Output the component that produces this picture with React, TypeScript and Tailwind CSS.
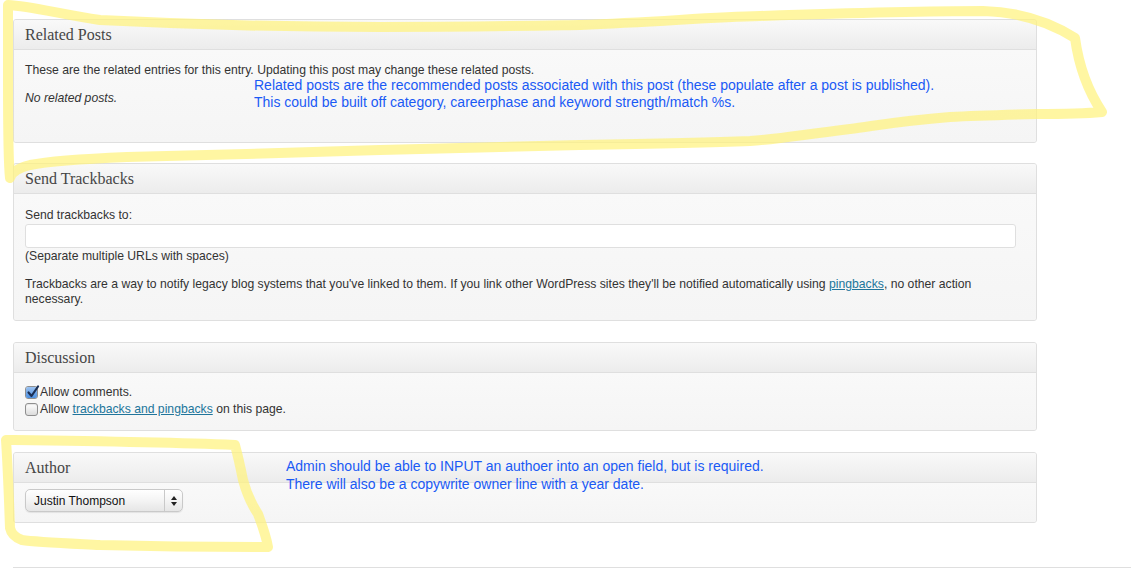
import React from "react";

const serif = "font-['Liberation_Serif',Georgia,serif]";

function Panel({
  title,
  bodyClass,
  className,
  children,
}: {
  title: string;
  bodyClass: string;
  className?: string;
  children?: React.ReactNode;
}) {
  return (
    <div
      className={`w-[1024px] border border-[#dfdfdf] rounded-[3px] bg-[#f5f5f5] overflow-hidden ${className ?? ""}`}
    >
      <div
        className={`h-[30px] flex items-center px-[11px] border-b border-[#dfdfdf] bg-gradient-to-b from-[#f9f9f9] to-[#ececec] text-[16px] text-[#464646] ${serif}`}
      >
        {title}
      </div>
      <div
        className={`px-[11px] bg-gradient-to-b from-[#f9f9f9] to-[#f5f5f5] text-[12.2px] text-[#333] ${bodyClass}`}
      >
        {children}
      </div>
    </div>
  );
}

function Check({ checked }: { checked?: boolean }) {
  return (
    <span className="relative inline-flex w-[13px] h-[13px] mr-[2px] shrink-0 rounded-[3px] border border-[#8f8f8f] bg-gradient-to-b from-[#ffffff] to-[#dcdcdc] shadow-[inset_0_1px_1px_rgba(0,0,0,0.1)]">
      {checked && (
        <>
          <span className="absolute inset-0 rounded-[2px] bg-gradient-to-b from-[#9cc3f2] to-[#4b8fe0]" />
          <svg
            viewBox="0 0 14 14"
            className="absolute left-[0px] top-[-2px] w-[14px] h-[14px]"
          >
            <path
              d="M2.5 7.5 L5.5 11 L12 1.5"
              fill="none"
              stroke="#1b2f55"
              strokeWidth="2.2"
              strokeLinecap="round"
              strokeLinejoin="round"
            />
          </svg>
        </>
      )}
    </span>
  );
}

export default function App() {
  return (
    <div className="relative w-[1131px] h-[569px] bg-white overflow-hidden font-['Liberation_Sans',Arial,sans-serif]">
      <div className="pl-[13px] pt-[19px] flex flex-col">
        <Panel title="Related Posts" bodyClass="h-[92px] pt-[11px]" className="mb-[20px]">
          <p className="leading-[18px]">
            These are the related entries for this entry. Updating this post may change these related posts.
          </p>
          <p className="leading-[18px] mt-[10px] italic">No related posts.</p>
        </Panel>

        <Panel title="Send Trackbacks" bodyClass="h-[126px] pt-[13px]" className="mb-[21px]">
          <p className="leading-[16px]">Send trackbacks to:</p>
          <div className="mt-[1px] w-[991px] h-[24px] bg-white border border-[#dfdfdf] rounded-[3px]" />
          <p className="leading-[16px]">(Separate multiple URLs with spaces)</p>
          <p className="leading-[15px] mt-[13px] w-[960px]">
            Trackbacks are a way to notify legacy blog systems that you&apos;ve linked to them. If you link other WordPress sites they&apos;ll be notified automatically using <span className="text-[#21759b] underline">pingbacks</span>, no other action necessary.
          </p>
        </Panel>

        <Panel title="Discussion" bodyClass="h-[57px] pt-[11px]" className="mb-[21px]">
          <div className="flex items-center leading-[17px]">
            <Check checked />
            Allow comments.
          </div>
          <div className="flex items-center leading-[17px]">
            <Check />
            <span>
              Allow <span className="text-[#21759b] underline">trackbacks and pingbacks</span> on this page.
            </span>
          </div>
        </Panel>

        <Panel title="Author" bodyClass="h-[39px] pt-[6px]">
          <div className="flex items-center w-[158px] h-[23px] rounded-[5px] border border-[#c9c9c9] bg-gradient-to-b from-[#ffffff] via-[#f4f4f4] to-[#e6e6e6] shadow-[0_1px_1px_rgba(0,0,0,0.08)]">
            <span className="flex-1 pl-[8px] text-[12px] text-[#111]">Justin Thompson</span>
            <span className="w-px h-full bg-[#c9c9c9]" />
            <span className="w-[17px] flex flex-col items-center justify-center gap-[2px]">
              <span className="w-0 h-0 border-l-[3px] border-r-[3px] border-b-[4px] border-l-transparent border-r-transparent border-b-[#222]" />
              <span className="w-0 h-0 border-l-[3px] border-r-[3px] border-t-[4px] border-l-transparent border-r-transparent border-t-[#222]" />
            </span>
          </div>
        </Panel>

        <div className="mt-[44px] h-px bg-[#dfdfdf]" />
      </div>

      {/* annotations */}
      <div className="absolute left-[254px] top-[77px] text-[14px] leading-[17px] text-[#1a5af5]">
        <p>Related posts are the recommended posts associated with this post (these populate after a post is published).</p>
        <p>This could be built off category, careerphase and keyword strength/match %s.</p>
      </div>
      <div className="absolute left-[286px] top-[457px] text-[14px] leading-[18px] text-[#1a5af5]">
        <p>Admin should be able to INPUT an authoer into an open field, but is required.</p>
        <p>There will also be a copywrite owner line with a year date.</p>
      </div>

      {/* highlighter strokes */}
      <svg className="absolute inset-0 pointer-events-none" width="1131" height="569">
        <g fill="none" stroke="#fff27a" strokeOpacity="0.7" strokeWidth="10" strokeLinecap="round" strokeLinejoin="round">
          <path d="M8 5 C30 6 60 14 100 20 C200 25 300 27 380 27 C470 27 520 26 580 25 C660 22 710 17 760 16 C850 13 930 11 983 11 C1020 12 1050 22 1075 38 C1078 60 1084 85 1102 112 C1080 114 1060 114 1037 114 C1000 115 970 116 950 117 C900 121 880 125 850 129 C800 135 780 139 750 141 C700 143 640 144 580 145 C500 147 440 148 380 150 C300 153 200 155 127 157 C80 159 45 162 30 165 C18 168 12 172 10 178 C8 160 8 120 8 80 C8 50 8 25 8 5 Z" />
          <path d="M6 440 C80 441 160 442 235 445 C239 460 241 470 243 480 C247 495 252 505 258 514 C262 525 266 535 268 547 C200 547 140 546 100 545 C60 543 35 542 22 540 C14 537 11 533 10 528 C9 500 8 470 6 440 Z" />
        </g>
      </svg>
    </div>
  );
}
